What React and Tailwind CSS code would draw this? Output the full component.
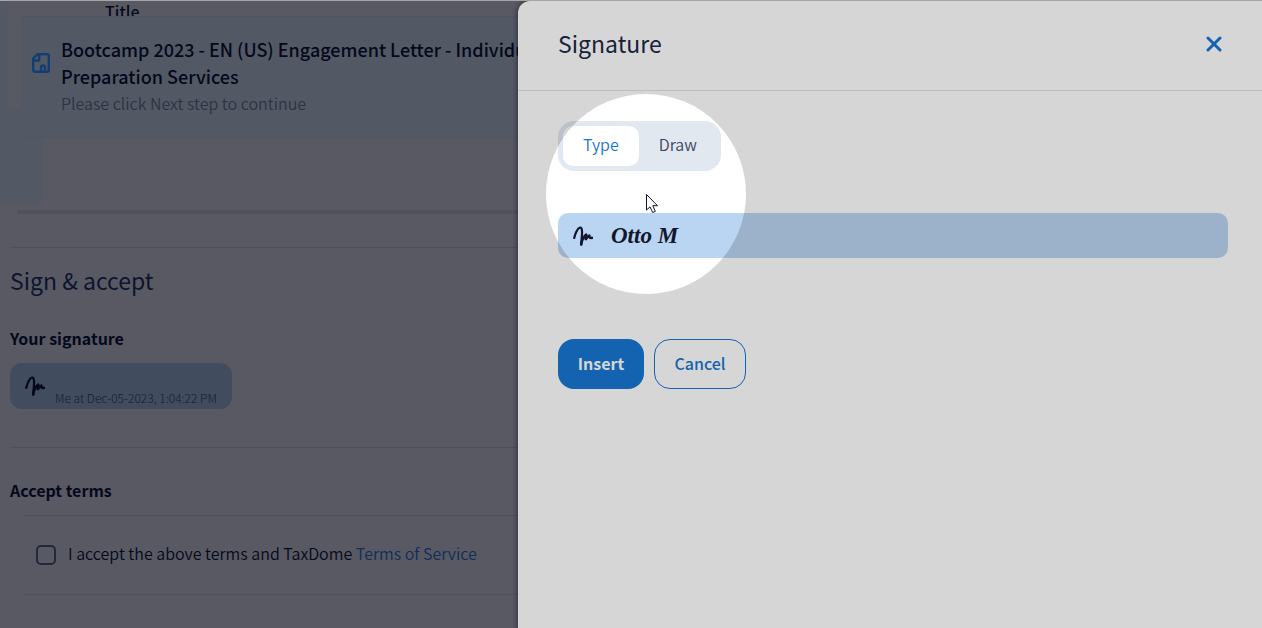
import React, { useState } from 'react';

const Scribble = ({ className }) => (
  <svg viewBox="0 0 20 20" fill="none" stroke="currentColor" strokeLinecap="round" strokeLinejoin="round" className={className} aria-hidden="true">
    <path strokeWidth="2.2" d="M1.200 12C2 8 4.500 2 7 1.500C9.500 1.200 9.300 7 8.600 13L8.200 18.500" />
    <path strokeWidth="2.6" d="M8.200 18.500C8.800 14.500 10.500 10.500 13.200 8.500C13.800 9.200 12.900 11.500 12.900 13" />
    <path strokeWidth="2.6" d="M12.900 13C14 11.200 15.300 10 16.300 9.600C16.200 11.200 16.800 12.300 19 11.800" />
  </svg>
);

const DocumentIcon = () => (
  <svg viewBox="0 0 18 20" fill="none" stroke="currentColor" strokeWidth="2.400" strokeLinejoin="round" className="mt-9 h-5 w-[18px] shrink-0 text-[#194a88]" aria-hidden="true">
    <path d="M5.500 1.200H15Q16.800 1.200 16.800 3V17Q16.800 18.800 15 18.800H3Q1.200 18.800 1.200 17V5.500Z" />
    <path d="M7.200 1.500V7.500H1.500" />
    <path d="M9 18.500V14.500A2 2 0 0 1 13 14.500V18.500" />
  </svg>
);

const Cursor = () => (
  <svg viewBox="0 0 12 19" className="absolute top-1/2 left-1/2 h-[19px] w-3" aria-hidden="true">
    <path d="M0.500 0.500V16L4 12.800L6.700 18.500L9.300 17.400L6.800 11.700H11.500Z" fill="#fff" stroke="#10142a" strokeLinejoin="round" />
  </svg>
);

const DocumentPage = () => {
  const [accepted, setAccepted] = useState(false);

  return (
    <main className="min-w-0 flex-1 overflow-hidden bg-[#6b6b76] whitespace-nowrap text-[#060a22]">
      <div className="flex">
        {/* Gutter */}
        <div className="flex w-[21px] shrink-0 flex-col">
          <div className="h-[107px] w-2 bg-[#646b78]" />
          <div className="flex-1 bg-[#646b78]" />
        </div>

        <div className="min-w-0 flex-1">
          <div className="h-[15px] overflow-hidden pl-[84px] text-base leading-5 font-medium">Title</div>
          <div className="flex h-[122px] gap-[11px] border-y border-[#5a6879] bg-[#646b78] pl-[11px]">
            <DocumentIcon />
            <div className="pt-[19px]">
              <h2 className="text-lg leading-[27px] font-medium">
                Bootcamp 2023 - EN (US) Engagement Letter - Individual
                <br />
                Preparation Services
              </h2>
              <p className="text-base leading-[27px] font-[350] text-[#353d53]">Please click Next step to continue</p>
            </div>
          </div>
          <div className="h-[65px] w-[22px] bg-[#646b78]" />
        </div>
      </div>

      <div className="mt-[7px] ml-[17px] h-1 bg-[#62626d]" />

      <section className="mt-[33px] ml-[10px] border-t border-[#596070]">
        <h1 className="mt-4 text-[23px] leading-8 text-[#101936]">Sign &amp; accept</h1>
        <h3 className="mt-[30px] text-base leading-6 font-bold">Your signature</h3>
        <div className="mt-[13px] flex h-[46px] w-[222px] rounded-xl bg-[#4e5b70] pl-[15px]">
          <Scribble className="mt-[13px] h-5 w-5" />
          <span className="mt-[25px] ml-[10px] text-xs leading-5 font-light text-[#1b233a]">Me at Dec-05-2023, 1:04:22 PM</span>
        </div>
      </section>

      <section className="mt-[38px] ml-[10px] border-t border-[#596070]">
        <h3 className="mt-[30px] text-base leading-6 font-bold">Accept terms</h3>
        <div className="mt-[13px] ml-[14px] flex h-20 items-center gap-3 border-y border-[#5b6272] pl-3">
          <input
            id="accept"
            type="checkbox"
            checked={accepted}
            onChange={() => setAccepted(!accepted)}
            className="h-5 w-5 shrink-0 appearance-none rounded-[5px] border-2 border-[#293149] checked:bg-[#293149]"
          />
          <label htmlFor="accept" className="pb-1 text-base font-[350]">
            I accept the above terms and TaxDome <a href="#terms" className="text-[#143569]">Terms of Service</a>
          </label>
        </div>
      </section>
    </main>
  );
};

const SignatureDrawer = () => {
  const [mode, setMode] = useState('Type');
  const [name, setName] = useState('Otto M');

  return (
    <aside className="w-[59%] max-w-[744px] shrink-0 rounded-tl-xl bg-white shadow-[-1px_0_4px_1px_rgba(20,20,45,0.4)]">
      <header className="flex h-[90px] items-center justify-between border-b border-[#e2e3ea] pr-10 pb-1 pl-10">
        <h2 className="text-[23px] text-[#1c2847]">Signature</h2>
        <button type="button" aria-label="Close" className="text-[#1976d2]">
          <svg viewBox="0 0 16 16" stroke="currentColor" strokeWidth="3" strokeLinecap="round" className="h-4 w-4">
            <path d="M2 2L14 14M14 2L2 14" />
          </svg>
        </button>
      </header>

      <div className="relative pt-[30px] pr-[34px] pl-10">
        <div className="flex h-[50px] w-[163px] rounded-2xl bg-[#e2e8f0] p-[5px]">
          {['Type', 'Draw'].map((item) => (
            <button
              key={item}
              type="button"
              onClick={() => setMode(item)}
              className={`rounded-[10px] px-5 pb-1 text-base font-[350] ${mode === item ? 'bg-white text-[#1976d2]' : 'text-[#3c455f]'}`}
            >
              {item}
            </button>
          ))}
        </div>

        <div className="mt-[42px] flex h-[45px] items-center gap-[18px] rounded-[10px] bg-[#bad5f1] pl-[15px] text-[#10162c]">
          <Scribble className="h-5 w-5 shrink-0" />
          <input
            type="text"
            aria-label="Signature text"
            value={name}
            onChange={(e) => setName(e.target.value)}
            className="h-full min-w-0 flex-1 bg-transparent font-['Liberation_Serif',cursive] text-[23px] font-bold italic outline-none"
          />
        </div>

        <div className="mt-[81px] flex gap-[10px] text-base">
          <button type="button" className="h-[50px] w-[86px] rounded-2xl bg-[#1976d2] pb-[2px] font-bold text-white">Insert</button>
          <button type="button" className="h-[50px] w-[92px] rounded-2xl border border-[#1976d2] pb-[2px] font-medium text-[#1976d2]">Cancel</button>
        </div>

        {/* Spotlight, dims everything around it */}
        <div className="pointer-events-none absolute top-[3px] left-7 z-10 h-[200px] w-[200px] rounded-full shadow-[0_0_0_2000px_rgba(0,0,0,0.16)]">
          <Cursor />
        </div>
      </div>
    </aside>
  );
};

const App = () => (
  <div className="flex min-h-screen overflow-hidden border-t border-[#a6a6a6] bg-[#6b6b76] font-['Noto_Sans_CJK_SC',sans-serif]">
    <DocumentPage />
    <SignatureDrawer />
  </div>
);

export default App;
